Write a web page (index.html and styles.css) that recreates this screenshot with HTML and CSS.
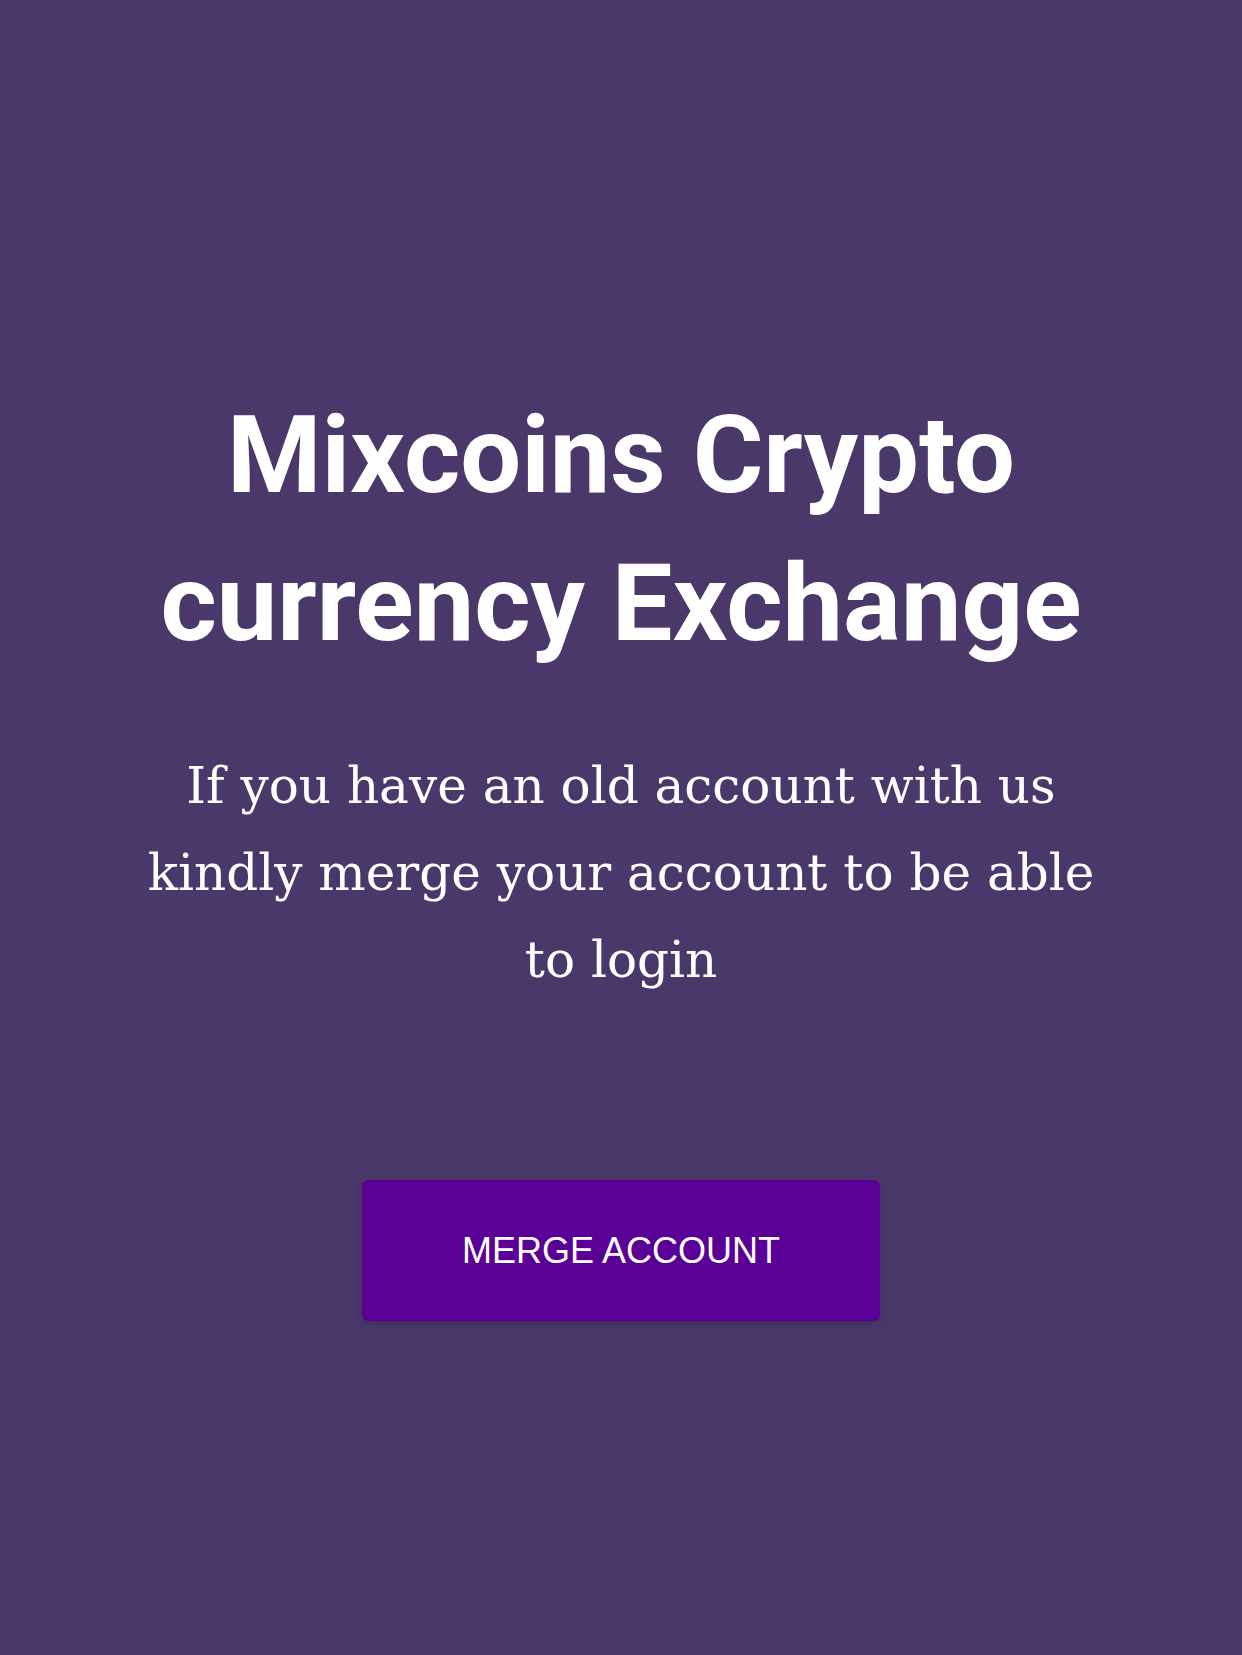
FILE: index.html
```html
<!DOCTYPE html>
<html lang="en">
<head>
    <meta charset="UTF-8">
    <meta name="viewport" content="width=device-width, initial-scale=1.0">
    <title>Mixcoins - Merge Account</title>
    <link rel="stylesheet" href="styles.css">
</head>
<body>
    <section class="merge-section">
        <h1>Mixcoins Crypto currency Exchange</h1>
        <p>If you have an old account with us kindly merge your account to be able to login</p>

        <div class="merge-actions">
            <button type="button" class="merge-btn">MERGE ACCOUNT</button>
        </div>
    </section>
</body>
</html>
```

FILE: styles.css
```css
/* General Styles */
body {
    margin: 0;
    padding: 0;
    min-height: 100vh;
    background-color: #4b386b;
    color: white;
    font-family: Roboto, Arial, sans-serif;
}

.merge-section {
    max-width: 970px;
    margin: 0 auto;
    padding-top: 381px;
    text-align: center;
}

.merge-section h1 {
    margin: 0;
    font-family: Roboto, "Liberation Sans", sans-serif;
    font-weight: 700;
    font-size: 108px;
    line-height: 148px;
}

.merge-section p {
    margin: 66px 0 0;
    font-family: "DejaVu Serif", "Liberation Serif", serif;
    font-size: 50px;
    line-height: 87px;
}

.merge-actions {
    margin-top: 176px;
    display: flex;
    justify-content: center;
}

.merge-btn {
    width: 518px;
    height: 141px;
    background-color: #5a0096;
    color: white;
    border: none;
    border-radius: 6px;
    font-family: "Liberation Sans", Arial, sans-serif;
    font-size: 36px;
    cursor: pointer;
    box-shadow: 0 3px 8px rgba(0, 0, 0, 0.18);
}

.merge-btn:hover {
    background-color: #4a007d;
}
```
